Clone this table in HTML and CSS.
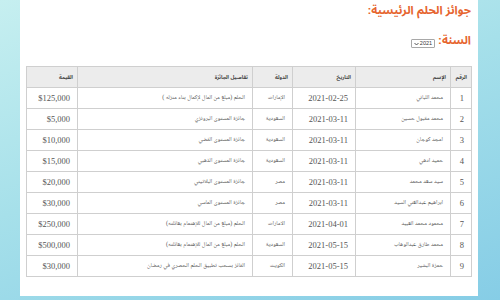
FILE: index.html
```html
<!DOCTYPE html>
<html lang="ar" dir="rtl">
<head>
<meta charset="utf-8">
<title>جوائز الحلم الرئيسية</title>
<link rel="stylesheet" href="styles.css">
</head>
<body>
<div class="page">
  <h2 class="title">جوائز الحلم الرئيسية:</h2>
  <div class="year">
    <span class="label">السنة:</span>
    <span class="year-select" role="listbox"><span class="val">2021</span><svg class="chev" width="5" height="4" viewBox="0 0 5 4"><path d="M0.5 1 L2.5 3 L4.5 1" fill="none" stroke="#444" stroke-width="0.9"/></svg></span>
  </div>
  <table class="prizes">
    <colgroup>
      <col class="c-num"><col class="c-name"><col class="c-date"><col class="c-country"><col class="c-details"><col class="c-value">
    </colgroup>
    <thead>
      <tr><th>الرقم</th><th>الإسم</th><th>التاريخ</th><th>الدولة</th><th>تفاصيل الجائزة</th><th>القيمة</th></tr>
    </thead>
    <tbody>
      <tr><td class="n">1</td><td class="ar">محمد اللباني</td><td class="n">2021-02-25</td><td class="ar">الإمارات</td><td class="ar">الحلم (مبلغ من المال لإكمال بناء منزله )</td><td class="n">$125,000</td></tr>
      <tr><td class="n">2</td><td class="ar">محمد مقبول حسين</td><td class="n">2021-03-11</td><td class="ar">السعودية</td><td class="ar">جائزة المستوى البرونزي</td><td class="n">$5,000</td></tr>
      <tr><td class="n">3</td><td class="ar">امجد كوجان</td><td class="n">2021-03-11</td><td class="ar">السعودية</td><td class="ar">جائزة المستوى الفضي</td><td class="n">$10,000</td></tr>
      <tr><td class="n">4</td><td class="ar">حميد ادهي</td><td class="n">2021-03-11</td><td class="ar">السعودية</td><td class="ar">جائزة المستوى الذهبي</td><td class="n">$15,000</td></tr>
      <tr><td class="n">5</td><td class="ar">سيد سعد محمد</td><td class="n">2021-03-11</td><td class="ar">مصر</td><td class="ar">جائزة المستوى البلاتيني</td><td class="n">$20,000</td></tr>
      <tr><td class="n">6</td><td class="ar">ابراهيم عبدالغني السيد</td><td class="n">2021-03-11</td><td class="ar">مصر</td><td class="ar">جائزة المستوى الماسي</td><td class="n">$30,000</td></tr>
      <tr><td class="n">7</td><td class="ar">محمود محمد العبيد</td><td class="n">2021-04-01</td><td class="ar">الامارات</td><td class="ar">الحلم (مبلغ من المال للإهتمام بعائلته)</td><td class="n">$250,000</td></tr>
      <tr><td class="n">8</td><td class="ar">محمد طارق عبدالوهاب</td><td class="n">2021-05-15</td><td class="ar">السعودية</td><td class="ar">الحلم (مبلغ من المال للإهتمام بعائلته)</td><td class="n">$500,000</td></tr>
      <tr><td class="n">9</td><td class="ar">حمزة البشير</td><td class="n">2021-05-15</td><td class="ar">الكويت</td><td class="ar">الفائز بسحب تطبيق الحلم الحصري في رمضان</td><td class="n">$30,000</td></tr>
    </tbody>
  </table>
</div>
</body>
</html>
```

FILE: styles.css
```css
html, body {
  margin: 0;
  padding: 0;
}
body {
  width: 500px;
  height: 300px;
  overflow: hidden;
  background: linear-gradient(160deg, #c6eff0 0%, #a6e0ea 45%, #86cde6 100%);
  font-family: "Liberation Serif", "Noto Naskh Arabic", "DejaVu Sans", serif;
}
.page {
  background: #ffffff;
  margin: 0 22px 0 20px;
  height: 296px;
  padding: 0 6px 0 7px;
  box-sizing: border-box;
  display: flex;
  flex-direction: column;
}
.title {
  margin: 0;
  font-family: "Liberation Sans", "Noto Sans Arabic", "DejaVu Sans", sans-serif;
  font-size: 11.5px;
  line-height: 20px;
  font-weight: bold;
  color: #e6652f;
  padding: 0 1px 0 0;
}
.year {
  display: flex;
  align-items: flex-end;
  gap: 3px;
  margin-top: 10px;
  padding-right: 1px;
}
.label {
  font-family: "Liberation Sans", "Noto Sans Arabic", "DejaVu Sans", sans-serif;
  font-size: 11.5px;
  line-height: 20px;
  font-weight: bold;
  color: #e6652f;
}
.year-select {
  display: flex;
  align-items: center;
  justify-content: space-between;
  box-sizing: border-box;
  height: 9px;
  width: 24px;
  padding: 0 2px;
  margin-bottom: 2px;
  border: 1px solid #a8a8a8;
  border-radius: 1px;
  background: #fff;
}
.year-select .val {
  font-family: "Liberation Sans", sans-serif;
  font-size: 5.5px;
  line-height: 7px;
  color: #333;
}
.prizes {
  margin-top: 16px;
  width: 445px;
  border-collapse: collapse;
  table-layout: fixed;
  color: #555;
}
.c-num { width: 21px; }
.c-name { width: 95px; }
.c-date { width: 63px; }
.c-country { width: 40px; }
.c-details { width: 175px; }
.c-value { width: 51px; }
.prizes th, .prizes td {
  border: 1px solid #cfcfcf;
  height: 20px;
  padding: 0 7px 0 2px;
  text-align: right;
  white-space: nowrap;
  overflow: hidden;
}
.prizes th {
  background: #ececec;
  font-family: "Liberation Sans", "Noto Sans Arabic", "DejaVu Sans", sans-serif;
  font-size: 5.2px;
  font-weight: bold;
  color: #444;
  padding-right: 4px;
}
.prizes td.n {
  font-size: 8.5px;
}
.prizes td.ar {
  font-family: "Liberation Serif", "Noto Naskh Arabic", "DejaVu Sans", serif;
  font-size: 6px;
}
```
